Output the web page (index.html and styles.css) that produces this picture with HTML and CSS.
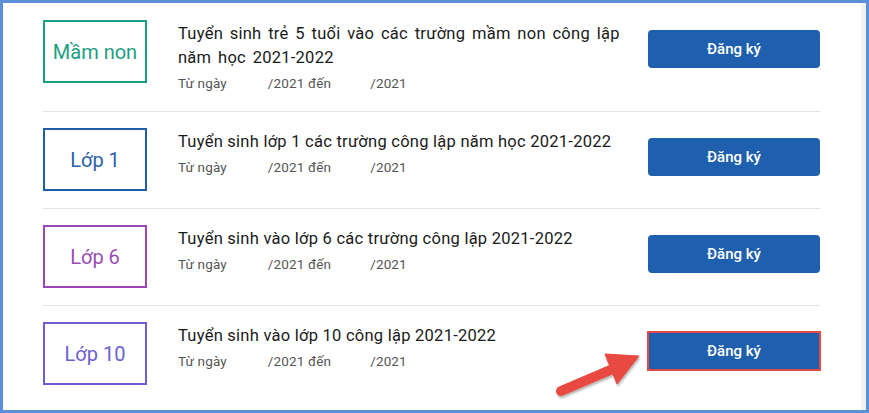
FILE: index.html
```html
<!DOCTYPE html>
<html lang="vi">
<head>
    <meta charset="UTF-8">
    <title>Tuyển sinh 2021-2022</title>
    <link rel="stylesheet" href="styles.css">
</head>
<body>
<div class="frame">
    <div class="inner">
        <div class="list">
            <div class="row">
                <div class="grade grade-mn">Mầm non</div>
                <div class="info">
                    <div class="title wide">Tuyển sinh trẻ 5 tuổi vào các trường mầm non công lập<br>năm học 2021-2022</div>
                    <div class="date"><span class="lbl">Từ ngày</span><span class="blank"></span><span class="lbl">/2021 đến</span><span class="blank"></span><span class="lbl">/2021</span></div>
                </div>
                <button class="btn">Đăng ký</button>
            </div>
            <div class="row">
                <div class="grade grade-1">Lớp 1</div>
                <div class="info">
                    <div class="title">Tuyển sinh lớp 1 các trường công lập năm học 2021-2022</div>
                    <div class="date"><span class="lbl">Từ ngày</span><span class="blank"></span><span class="lbl">/2021 đến</span><span class="blank"></span><span class="lbl">/2021</span></div>
                </div>
                <button class="btn">Đăng ký</button>
            </div>
            <div class="row">
                <div class="grade grade-6">Lớp 6</div>
                <div class="info">
                    <div class="title">Tuyển sinh vào lớp 6 các trường công lập 2021-2022</div>
                    <div class="date"><span class="lbl">Từ ngày</span><span class="blank"></span><span class="lbl">/2021 đến</span><span class="blank"></span><span class="lbl">/2021</span></div>
                </div>
                <button class="btn">Đăng ký</button>
            </div>
            <div class="row">
                <div class="grade grade-10">Lớp 10</div>
                <div class="info">
                    <div class="title">Tuyển sinh vào lớp 10 công lập 2021-2022</div>
                    <div class="date"><span class="lbl">Từ ngày</span><span class="blank"></span><span class="lbl">/2021 đến</span><span class="blank"></span><span class="lbl">/2021</span></div>
                </div>
                <button class="btn marked">Đăng ký</button>
            </div>
        </div>
    </div>
    <!-- mũi tên chỉ vào nút -->
    <svg class="arrow" width="110" height="60" viewBox="0 0 110 60">
        <defs>
            <filter id="sh" x="-20%" y="-20%" width="140%" height="150%">
                <feDropShadow dx="1" dy="2" stdDeviation="1.2" flood-color="#000" flood-opacity="0.3"/>
            </filter>
        </defs>
        <g filter="url(#sh)" fill="#e8483f" stroke="#e8483f">
            <line x1="8" y1="43" x2="62" y2="20" stroke-width="10" stroke-linecap="round"/>
            <polygon points="52,6 86,8 64,36" stroke-width="1" stroke-linejoin="round"/>
        </g>
    </svg>
</div>
</body>
</html>
```

FILE: styles.css
```css
*{
    box-sizing:border-box;
}
body{
    margin:0;
    background:#fff;
    font-family:Roboto,"Liberation Sans",Arial,sans-serif;
}
.frame{
    position:relative;
    width:869px;
    height:413px;
    border:3px solid #5b8fd8;
    overflow:hidden;
}
.inner{
    height:100%;
    border-right:5px solid #f2f2f2;
    padding:0 41px 0 40px;
}
.row{
    display:flex;
    align-items:flex-start;
    padding:16px 0 17px;
    border-top:1px solid #e2e2e2;
}
.row:first-child{
    border-top-color:transparent;
}
.grade{
    width:104px;
    height:63px;
    flex:none;
    border:2px solid;
    display:flex;
    align-items:center;
    justify-content:center;
    font-size:20px;
}
.grade-mn{color:#1d9e84;border-color:#1a9e83;}
.grade-1{color:#2a62ab;border-color:#1e5fa8;}
.grade-6{color:#9a4cb6;border-color:#9a47b5;}
.grade-10{color:#6b61d2;border-color:#6a5ed2;}
.info{
    flex:1;
    padding-left:31px;
    padding-top:2px;
}
.title{
    font-size:16.5px;
    letter-spacing:0.25px;
    line-height:24px;
    color:#1a1a1a;
}
.title.wide{
    word-spacing:2.4px;
}
.date{
    margin-top:2px;
    font-size:13.5px;
    letter-spacing:0.15px;
    line-height:22px;
    color:#555;
}
.blank{
    display:inline-block;
    width:41px;
}
.date .blank:nth-child(4){
    width:39px;
}
.btn{
    flex:none;
    margin-top:10px;
    width:172px;
    height:38px;
    border:0;
    border-radius:4px;
    background:#1f60ae;
    color:#fff;
    font-family:Roboto,"Liberation Sans",Arial,sans-serif;
    font-size:15px;
    font-weight:500;
}
.btn.marked{
    border-radius:0;
    outline:2px solid #e34a45;
    outline-offset:-1px;
}
.arrow{
    position:absolute;
    left:550px;
    top:345px;
}
```
